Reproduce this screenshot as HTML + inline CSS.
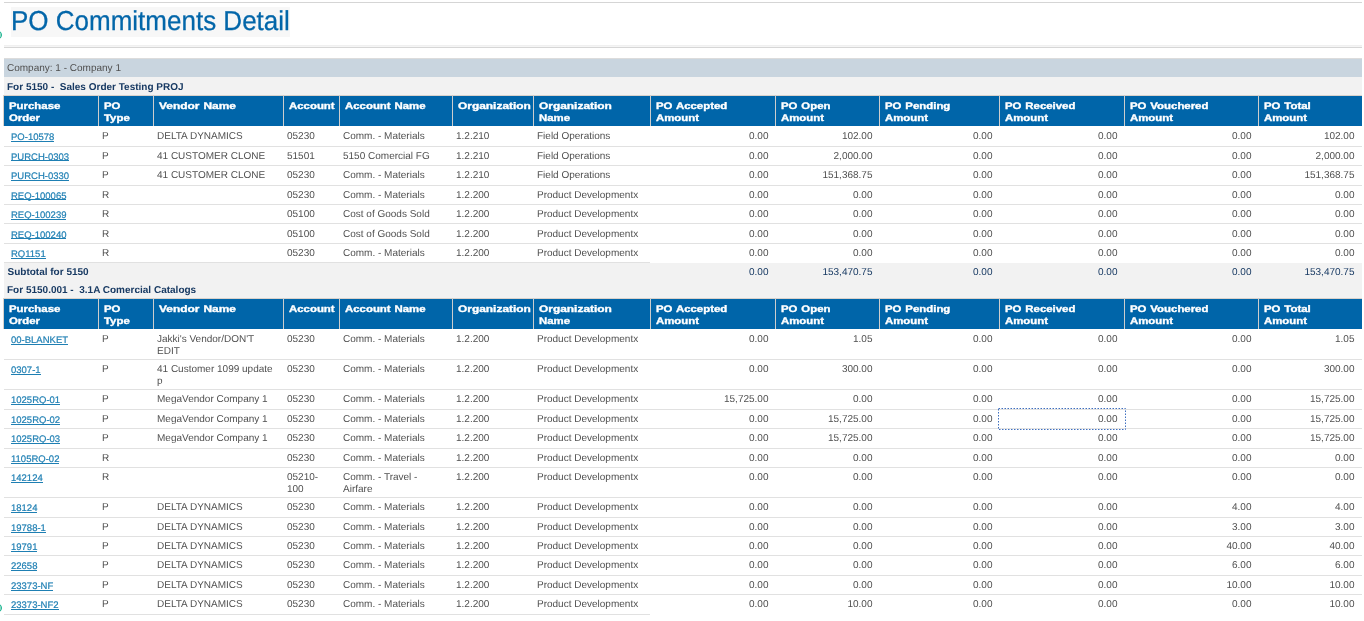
<!DOCTYPE html><html><head><meta charset="utf-8"><title>PO Commitments Detail</title><style>
*{box-sizing:border-box;margin:0;padding:0}
html,body{margin:0;padding:0}
body{width:1364px;height:621px;overflow:hidden;background:#fff;position:relative;font-family:"Liberation Sans",sans-serif;text-rendering:geometricPrecision}
.t{position:absolute;white-space:nowrap;line-height:20px;height:20px}
.b{font-size:10px;color:#505050}
.bb{font-size:10px;font-weight:bold;color:#183a63}
.sv{font-size:10px;color:#183a63}
.lk{font-size:9.5px;color:#1e7fb3;-webkit-text-stroke:0.2px #1e7fb3}
.ul{position:absolute;height:1px;background:#1e7fb3}
.hd{font-size:9.5px;font-weight:bold;color:#fff;transform-origin:0 0;transform:scaleX(1.2);-webkit-text-stroke:0.35px #fff;word-spacing:0.6px}
.clip{overflow:hidden}
.hr{position:absolute;left:4px;width:1358px;height:1px;background:#d5d5d5}
.title{position:absolute;left:11px;top:7px;height:30px;width:279px;background:#f7f7f7}
.ttxt{position:absolute;left:11px;top:11px;line-height:20px;font-size:26px;color:#0366a9;white-space:nowrap;transform-origin:0 19px;transform:scaleY(1.055);-webkit-text-stroke:0.25px #0366a9}
.ring{position:absolute;width:10px;height:10px;border-radius:50%;border:1.8px solid #1db592;background:#9adccb}
.bar{position:absolute;left:4px;width:1358px}
.hbg{position:absolute;left:3px;width:1359px;height:31px;background:#0065a9;border-top:1px solid #d9d2cc;border-left:1px solid #d9d2cc}
.hsep{position:absolute;width:1px;height:31px;background:#cdcdcd}
.rb{position:absolute;left:4px;height:1px;background:#e1e1e1}
.focus{position:absolute;left:998px;top:408px;width:128px;height:22px}
</style></head><body>
<div id="w" style="position:absolute;left:0;top:0;width:1364px;height:621px;will-change:transform">
<div class="hr" style="top:2px"></div>
<div class="title"></div><div class="ttxt">PO Commitments Detail</div>
<div class="hr" style="top:45px;background:#f0f0f0"></div><div class="hr" style="top:46px;background:#f5f5f5"></div><div class="hr" style="top:47px;background:#d6d6d6"></div>
<div class="ring" style="left:-7.8px;top:30px"></div>
<div class="bar" style="top:58px;height:19px;background:#c9d5df;border-top:1px solid #dcdcdc"></div>
<div class="t b" style="left:7px;top:59px">Company: 1 - Company 1</div>
<div class="bar" style="top:77px;height:18px;background:#f2f2f2"></div>
<div class="t bb" style="left:7px;top:78px">For 5150 -  Sales Order Testing PROJ</div>
<div class="hbg" style="top:95px"></div>
<div class="t hd" style="left:8.5px;top:97px">Purchase</div>
<div class="t hd" style="left:8.5px;top:109px">Order</div>
<div class="hsep" style="left:98px;top:95px"></div>
<div class="t hd" style="left:103.5px;top:97px">PO</div>
<div class="t hd" style="left:103.5px;top:109px">Type</div>
<div class="hsep" style="left:153px;top:95px"></div>
<div class="t hd" style="left:158.5px;top:97px;transform:scaleX(1.255)">Vendor Name</div>
<div class="hsep" style="left:283px;top:95px"></div>
<div class="t hd" style="left:288.5px;top:97px">Account</div>
<div class="hsep" style="left:339px;top:95px"></div>
<div class="t hd" style="left:344.5px;top:97px">Account Name</div>
<div class="hsep" style="left:452px;top:95px"></div>
<div class="t hd" style="left:457.5px;top:97px;transform:scaleX(1.255)">Organization</div>
<div class="hsep" style="left:533px;top:95px"></div>
<div class="t hd" style="left:538.5px;top:97px;transform:scaleX(1.255)">Organization</div>
<div class="t hd" style="left:538.5px;top:109px">Name</div>
<div class="hsep" style="left:650px;top:95px"></div>
<div class="t hd" style="left:655.5px;top:97px">PO Accepted</div>
<div class="t hd" style="left:655.5px;top:109px">Amount</div>
<div class="hsep" style="left:775px;top:95px"></div>
<div class="t hd" style="left:780.5px;top:97px">PO Open</div>
<div class="t hd" style="left:780.5px;top:109px">Amount</div>
<div class="hsep" style="left:879px;top:95px"></div>
<div class="t hd" style="left:884.5px;top:97px">PO Pending</div>
<div class="t hd" style="left:884.5px;top:109px">Amount</div>
<div class="hsep" style="left:999px;top:95px"></div>
<div class="t hd" style="left:1004.5px;top:97px">PO Received</div>
<div class="t hd" style="left:1004.5px;top:109px">Amount</div>
<div class="hsep" style="left:1124px;top:95px"></div>
<div class="t hd" style="left:1129.5px;top:97px">PO Vouchered</div>
<div class="t hd" style="left:1129.5px;top:109px">Amount</div>
<div class="hsep" style="left:1258px;top:95px"></div>
<div class="t hd" style="left:1263.5px;top:97px">PO Total</div>
<div class="t hd" style="left:1263.5px;top:109px">Amount</div>
<div class="rb" style="top:146px;width:1358px"></div>
<div class="t lk" style="left:11px;top:128px">PO-10578</div>
<div class="ul" style="left:11px;top:141px;width:43.3px"></div>
<div class="t b" style="left:102px;top:127px">P</div>
<div class="t b" style="left:157px;top:127px">DELTA DYNAMICS</div>
<div class="t b" style="left:287px;top:127px">05230</div>
<div class="t b" style="left:343px;top:127px">Comm. - Materials</div>
<div class="t b" style="left:456px;top:127px">1.2.210</div>
<div class="t b clip" style="left:537px;top:127px;width:109px">Field Operations</div>
<div class="t b r" style="right:595.5px;top:127px">0.00</div>
<div class="t b r" style="right:491.5px;top:127px">102.00</div>
<div class="t b r" style="right:371.5px;top:127px">0.00</div>
<div class="t b r" style="right:246.5px;top:127px">0.00</div>
<div class="t b r" style="right:112.5px;top:127px">0.00</div>
<div class="t b r" style="right:9.5px;top:127px">102.00</div>
<div class="rb" style="top:165px;width:1358px"></div>
<div class="t lk" style="left:11px;top:148px">PURCH-0303</div>
<div class="ul" style="left:11px;top:160px;width:58.08px"></div>
<div class="t b" style="left:102px;top:147px">P</div>
<div class="t b" style="left:157px;top:147px">41 CUSTOMER CLONE</div>
<div class="t b" style="left:287px;top:147px">51501</div>
<div class="t b" style="left:343px;top:147px">5150 Comercial FG</div>
<div class="t b" style="left:456px;top:147px">1.2.210</div>
<div class="t b clip" style="left:537px;top:147px;width:109px">Field Operations</div>
<div class="t b r" style="right:595.5px;top:147px">0.00</div>
<div class="t b r" style="right:491.5px;top:147px">2,000.00</div>
<div class="t b r" style="right:371.5px;top:147px">0.00</div>
<div class="t b r" style="right:246.5px;top:147px">0.00</div>
<div class="t b r" style="right:112.5px;top:147px">0.00</div>
<div class="t b r" style="right:9.5px;top:147px">2,000.00</div>
<div class="rb" style="top:185px;width:1358px"></div>
<div class="t lk" style="left:11px;top:167px">PURCH-0330</div>
<div class="ul" style="left:11px;top:180px;width:58.08px"></div>
<div class="t b" style="left:102px;top:166px">P</div>
<div class="t b" style="left:157px;top:166px">41 CUSTOMER CLONE</div>
<div class="t b" style="left:287px;top:166px">05230</div>
<div class="t b" style="left:343px;top:166px">Comm. - Materials</div>
<div class="t b" style="left:456px;top:166px">1.2.210</div>
<div class="t b clip" style="left:537px;top:166px;width:109px">Field Operations</div>
<div class="t b r" style="right:595.5px;top:166px">0.00</div>
<div class="t b r" style="right:491.5px;top:166px">151,368.75</div>
<div class="t b r" style="right:371.5px;top:166px">0.00</div>
<div class="t b r" style="right:246.5px;top:166px">0.00</div>
<div class="t b r" style="right:112.5px;top:166px">0.00</div>
<div class="t b r" style="right:9.5px;top:166px">151,368.75</div>
<div class="rb" style="top:204px;width:1358px"></div>
<div class="t lk" style="left:11px;top:187px">REQ-100065</div>
<div class="ul" style="left:11px;top:199px;width:55.45px"></div>
<div class="t b" style="left:102px;top:186px">R</div>
<div class="t b" style="left:287px;top:186px">05230</div>
<div class="t b" style="left:343px;top:186px">Comm. - Materials</div>
<div class="t b" style="left:456px;top:186px">1.2.200</div>
<div class="t b clip" style="left:537px;top:186px;width:109px">Product Developmentx</div>
<div class="t b r" style="right:595.5px;top:186px">0.00</div>
<div class="t b r" style="right:491.5px;top:186px">0.00</div>
<div class="t b r" style="right:371.5px;top:186px">0.00</div>
<div class="t b r" style="right:246.5px;top:186px">0.00</div>
<div class="t b r" style="right:112.5px;top:186px">0.00</div>
<div class="t b r" style="right:9.5px;top:186px">0.00</div>
<div class="rb" style="top:223px;width:1358px"></div>
<div class="t lk" style="left:11px;top:206px">REQ-100239</div>
<div class="ul" style="left:11px;top:219px;width:55.45px"></div>
<div class="t b" style="left:102px;top:205px">R</div>
<div class="t b" style="left:287px;top:205px">05100</div>
<div class="t b" style="left:343px;top:205px">Cost of Goods Sold</div>
<div class="t b" style="left:456px;top:205px">1.2.200</div>
<div class="t b clip" style="left:537px;top:205px;width:109px">Product Developmentx</div>
<div class="t b r" style="right:595.5px;top:205px">0.00</div>
<div class="t b r" style="right:491.5px;top:205px">0.00</div>
<div class="t b r" style="right:371.5px;top:205px">0.00</div>
<div class="t b r" style="right:246.5px;top:205px">0.00</div>
<div class="t b r" style="right:112.5px;top:205px">0.00</div>
<div class="t b r" style="right:9.5px;top:205px">0.00</div>
<div class="rb" style="top:243px;width:1358px"></div>
<div class="t lk" style="left:11px;top:226px">REQ-100240</div>
<div class="ul" style="left:11px;top:238px;width:55.45px"></div>
<div class="t b" style="left:102px;top:225px">R</div>
<div class="t b" style="left:287px;top:225px">05100</div>
<div class="t b" style="left:343px;top:225px">Cost of Goods Sold</div>
<div class="t b" style="left:456px;top:225px">1.2.200</div>
<div class="t b clip" style="left:537px;top:225px;width:109px">Product Developmentx</div>
<div class="t b r" style="right:595.5px;top:225px">0.00</div>
<div class="t b r" style="right:491.5px;top:225px">0.00</div>
<div class="t b r" style="right:371.5px;top:225px">0.00</div>
<div class="t b r" style="right:246.5px;top:225px">0.00</div>
<div class="t b r" style="right:112.5px;top:225px">0.00</div>
<div class="t b r" style="right:9.5px;top:225px">0.00</div>
<div class="rb" style="top:262px;width:646px"></div>
<div class="t lk" style="left:11px;top:245px">RQ1151</div>
<div class="ul" style="left:11px;top:258px;width:34.68px"></div>
<div class="t b" style="left:102px;top:244px">R</div>
<div class="t b" style="left:287px;top:244px">05230</div>
<div class="t b" style="left:343px;top:244px">Comm. - Materials</div>
<div class="t b" style="left:456px;top:244px">1.2.200</div>
<div class="t b clip" style="left:537px;top:244px;width:109px">Product Developmentx</div>
<div class="t b r" style="right:595.5px;top:244px">0.00</div>
<div class="t b r" style="right:491.5px;top:244px">0.00</div>
<div class="t b r" style="right:371.5px;top:244px">0.00</div>
<div class="t b r" style="right:246.5px;top:244px">0.00</div>
<div class="t b r" style="right:112.5px;top:244px">0.00</div>
<div class="t b r" style="right:9.5px;top:244px">0.00</div>
<div class="bar" style="top:263px;height:35px;background:#f2f2f2"></div>
<div class="t bb" style="left:7.5px;top:263px">Subtotal for 5150</div>
<div class="t sv r" style="right:595.5px;top:263px">0.00</div>
<div class="t sv r" style="right:491.5px;top:263px">153,470.75</div>
<div class="t sv r" style="right:371.5px;top:263px">0.00</div>
<div class="t sv r" style="right:246.5px;top:263px">0.00</div>
<div class="t sv r" style="right:112.5px;top:263px">0.00</div>
<div class="t sv r" style="right:9.5px;top:263px">153,470.75</div>
<div class="t bb" style="left:7px;top:281px">For 5150.001 -  3.1A Comercial Catalogs</div>
<div class="hbg" style="top:298px"></div>
<div class="t hd" style="left:8.5px;top:300px">Purchase</div>
<div class="t hd" style="left:8.5px;top:312px">Order</div>
<div class="hsep" style="left:98px;top:298px"></div>
<div class="t hd" style="left:103.5px;top:300px">PO</div>
<div class="t hd" style="left:103.5px;top:312px">Type</div>
<div class="hsep" style="left:153px;top:298px"></div>
<div class="t hd" style="left:158.5px;top:300px;transform:scaleX(1.255)">Vendor Name</div>
<div class="hsep" style="left:283px;top:298px"></div>
<div class="t hd" style="left:288.5px;top:300px">Account</div>
<div class="hsep" style="left:339px;top:298px"></div>
<div class="t hd" style="left:344.5px;top:300px">Account Name</div>
<div class="hsep" style="left:452px;top:298px"></div>
<div class="t hd" style="left:457.5px;top:300px;transform:scaleX(1.255)">Organization</div>
<div class="hsep" style="left:533px;top:298px"></div>
<div class="t hd" style="left:538.5px;top:300px;transform:scaleX(1.255)">Organization</div>
<div class="t hd" style="left:538.5px;top:312px">Name</div>
<div class="hsep" style="left:650px;top:298px"></div>
<div class="t hd" style="left:655.5px;top:300px">PO Accepted</div>
<div class="t hd" style="left:655.5px;top:312px">Amount</div>
<div class="hsep" style="left:775px;top:298px"></div>
<div class="t hd" style="left:780.5px;top:300px">PO Open</div>
<div class="t hd" style="left:780.5px;top:312px">Amount</div>
<div class="hsep" style="left:879px;top:298px"></div>
<div class="t hd" style="left:884.5px;top:300px">PO Pending</div>
<div class="t hd" style="left:884.5px;top:312px">Amount</div>
<div class="hsep" style="left:999px;top:298px"></div>
<div class="t hd" style="left:1004.5px;top:300px">PO Received</div>
<div class="t hd" style="left:1004.5px;top:312px">Amount</div>
<div class="hsep" style="left:1124px;top:298px"></div>
<div class="t hd" style="left:1129.5px;top:300px">PO Vouchered</div>
<div class="t hd" style="left:1129.5px;top:312px">Amount</div>
<div class="hsep" style="left:1258px;top:298px"></div>
<div class="t hd" style="left:1263.5px;top:300px">PO Total</div>
<div class="t hd" style="left:1263.5px;top:312px">Amount</div>
<div class="rb" style="top:359px;width:1358px"></div>
<div class="t lk" style="left:11px;top:331px">00-BLANKET</div>
<div class="ul" style="left:11px;top:344px;width:57.02px"></div>
<div class="t b" style="left:102px;top:330px">P</div>
<div class="t b" style="left:157px;top:330px">Jakki's Vendor/DON'T</div>
<div class="t b" style="left:157px;top:342px">EDIT</div>
<div class="t b" style="left:287px;top:330px">05230</div>
<div class="t b" style="left:343px;top:330px">Comm. - Materials</div>
<div class="t b" style="left:456px;top:330px">1.2.200</div>
<div class="t b clip" style="left:537px;top:330px;width:109px">Product Developmentx</div>
<div class="t b r" style="right:595.5px;top:330px">0.00</div>
<div class="t b r" style="right:491.5px;top:330px">1.05</div>
<div class="t b r" style="right:371.5px;top:330px">0.00</div>
<div class="t b r" style="right:246.5px;top:330px">0.00</div>
<div class="t b r" style="right:112.5px;top:330px">0.00</div>
<div class="t b r" style="right:9.5px;top:330px">1.05</div>
<div class="rb" style="top:389px;width:1358px"></div>
<div class="t lk" style="left:11px;top:361px">0307-1</div>
<div class="ul" style="left:11px;top:374px;width:29.58px"></div>
<div class="t b" style="left:102px;top:360px">P</div>
<div class="t b" style="left:157px;top:360px">41 Customer 1099 update</div>
<div class="t b" style="left:157px;top:372px">p</div>
<div class="t b" style="left:287px;top:360px">05230</div>
<div class="t b" style="left:343px;top:360px">Comm. - Materials</div>
<div class="t b" style="left:456px;top:360px">1.2.200</div>
<div class="t b clip" style="left:537px;top:360px;width:109px">Product Developmentx</div>
<div class="t b r" style="right:595.5px;top:360px">0.00</div>
<div class="t b r" style="right:491.5px;top:360px">300.00</div>
<div class="t b r" style="right:371.5px;top:360px">0.00</div>
<div class="t b r" style="right:246.5px;top:360px">0.00</div>
<div class="t b r" style="right:112.5px;top:360px">0.00</div>
<div class="t b r" style="right:9.5px;top:360px">300.00</div>
<div class="rb" style="top:409px;width:1358px"></div>
<div class="t lk" style="left:11px;top:391px">1025RQ-01</div>
<div class="ul" style="left:11px;top:404px;width:49.11px"></div>
<div class="t b" style="left:102px;top:390px">P</div>
<div class="t b" style="left:157px;top:390px">MegaVendor Company 1</div>
<div class="t b" style="left:287px;top:390px">05230</div>
<div class="t b" style="left:343px;top:390px">Comm. - Materials</div>
<div class="t b" style="left:456px;top:390px">1.2.200</div>
<div class="t b clip" style="left:537px;top:390px;width:109px">Product Developmentx</div>
<div class="t b r" style="right:595.5px;top:390px">15,725.00</div>
<div class="t b r" style="right:491.5px;top:390px">0.00</div>
<div class="t b r" style="right:371.5px;top:390px">0.00</div>
<div class="t b r" style="right:246.5px;top:390px">0.00</div>
<div class="t b r" style="right:112.5px;top:390px">0.00</div>
<div class="t b r" style="right:9.5px;top:390px">15,725.00</div>
<div class="rb" style="top:428px;width:1358px"></div>
<div class="t lk" style="left:11px;top:411px">1025RQ-02</div>
<div class="ul" style="left:11px;top:424px;width:49.11px"></div>
<div class="t b" style="left:102px;top:410px">P</div>
<div class="t b" style="left:157px;top:410px">MegaVendor Company 1</div>
<div class="t b" style="left:287px;top:410px">05230</div>
<div class="t b" style="left:343px;top:410px">Comm. - Materials</div>
<div class="t b" style="left:456px;top:410px">1.2.200</div>
<div class="t b clip" style="left:537px;top:410px;width:109px">Product Developmentx</div>
<div class="t b r" style="right:595.5px;top:410px">0.00</div>
<div class="t b r" style="right:491.5px;top:410px">15,725.00</div>
<div class="t b r" style="right:371.5px;top:410px">0.00</div>
<div class="t b r" style="right:246.5px;top:410px">0.00</div>
<div class="t b r" style="right:112.5px;top:410px">0.00</div>
<div class="t b r" style="right:9.5px;top:410px">15,725.00</div>
<div class="rb" style="top:448px;width:1358px"></div>
<div class="t lk" style="left:11px;top:430px">1025RQ-03</div>
<div class="ul" style="left:11px;top:443px;width:49.11px"></div>
<div class="t b" style="left:102px;top:429px">P</div>
<div class="t b" style="left:157px;top:429px">MegaVendor Company 1</div>
<div class="t b" style="left:287px;top:429px">05230</div>
<div class="t b" style="left:343px;top:429px">Comm. - Materials</div>
<div class="t b" style="left:456px;top:429px">1.2.200</div>
<div class="t b clip" style="left:537px;top:429px;width:109px">Product Developmentx</div>
<div class="t b r" style="right:595.5px;top:429px">0.00</div>
<div class="t b r" style="right:491.5px;top:429px">15,725.00</div>
<div class="t b r" style="right:371.5px;top:429px">0.00</div>
<div class="t b r" style="right:246.5px;top:429px">0.00</div>
<div class="t b r" style="right:112.5px;top:429px">0.00</div>
<div class="t b r" style="right:9.5px;top:429px">15,725.00</div>
<div class="rb" style="top:467px;width:1358px"></div>
<div class="t lk" style="left:11px;top:450px">1105RQ-02</div>
<div class="ul" style="left:11px;top:463px;width:48.41px"></div>
<div class="t b" style="left:102px;top:449px">R</div>
<div class="t b" style="left:287px;top:449px">05230</div>
<div class="t b" style="left:343px;top:449px">Comm. - Materials</div>
<div class="t b" style="left:456px;top:449px">1.2.200</div>
<div class="t b clip" style="left:537px;top:449px;width:109px">Product Developmentx</div>
<div class="t b r" style="right:595.5px;top:449px">0.00</div>
<div class="t b r" style="right:491.5px;top:449px">0.00</div>
<div class="t b r" style="right:371.5px;top:449px">0.00</div>
<div class="t b r" style="right:246.5px;top:449px">0.00</div>
<div class="t b r" style="right:112.5px;top:449px">0.00</div>
<div class="t b r" style="right:9.5px;top:449px">0.00</div>
<div class="rb" style="top:497px;width:1358px"></div>
<div class="t lk" style="left:11px;top:469px">142124</div>
<div class="ul" style="left:11px;top:482px;width:31.7px"></div>
<div class="t b" style="left:102px;top:468px">R</div>
<div class="t b" style="left:287px;top:468px">05210-</div>
<div class="t b" style="left:287px;top:480px">100</div>
<div class="t b" style="left:343px;top:468px">Comm. - Travel -</div>
<div class="t b" style="left:343px;top:480px">Airfare</div>
<div class="t b" style="left:456px;top:468px">1.2.200</div>
<div class="t b clip" style="left:537px;top:468px;width:109px">Product Developmentx</div>
<div class="t b r" style="right:595.5px;top:468px">0.00</div>
<div class="t b r" style="right:491.5px;top:468px">0.00</div>
<div class="t b r" style="right:371.5px;top:468px">0.00</div>
<div class="t b r" style="right:246.5px;top:468px">0.00</div>
<div class="t b r" style="right:112.5px;top:468px">0.00</div>
<div class="t b r" style="right:9.5px;top:468px">0.00</div>
<div class="rb" style="top:517px;width:1358px"></div>
<div class="t lk" style="left:11px;top:499px">18124</div>
<div class="ul" style="left:11px;top:512px;width:26.41px"></div>
<div class="t b" style="left:102px;top:498px">P</div>
<div class="t b" style="left:157px;top:498px">DELTA DYNAMICS</div>
<div class="t b" style="left:287px;top:498px">05230</div>
<div class="t b" style="left:343px;top:498px">Comm. - Materials</div>
<div class="t b" style="left:456px;top:498px">1.2.200</div>
<div class="t b clip" style="left:537px;top:498px;width:109px">Product Developmentx</div>
<div class="t b r" style="right:595.5px;top:498px">0.00</div>
<div class="t b r" style="right:491.5px;top:498px">0.00</div>
<div class="t b r" style="right:371.5px;top:498px">0.00</div>
<div class="t b r" style="right:246.5px;top:498px">0.00</div>
<div class="t b r" style="right:112.5px;top:498px">4.00</div>
<div class="t b r" style="right:9.5px;top:498px">4.00</div>
<div class="rb" style="top:536px;width:1358px"></div>
<div class="t lk" style="left:11px;top:519px">19788-1</div>
<div class="ul" style="left:11px;top:532px;width:34.86px"></div>
<div class="t b" style="left:102px;top:518px">P</div>
<div class="t b" style="left:157px;top:518px">DELTA DYNAMICS</div>
<div class="t b" style="left:287px;top:518px">05230</div>
<div class="t b" style="left:343px;top:518px">Comm. - Materials</div>
<div class="t b" style="left:456px;top:518px">1.2.200</div>
<div class="t b clip" style="left:537px;top:518px;width:109px">Product Developmentx</div>
<div class="t b r" style="right:595.5px;top:518px">0.00</div>
<div class="t b r" style="right:491.5px;top:518px">0.00</div>
<div class="t b r" style="right:371.5px;top:518px">0.00</div>
<div class="t b r" style="right:246.5px;top:518px">0.00</div>
<div class="t b r" style="right:112.5px;top:518px">3.00</div>
<div class="t b r" style="right:9.5px;top:518px">3.00</div>
<div class="rb" style="top:555px;width:1358px"></div>
<div class="t lk" style="left:11px;top:538px">19791</div>
<div class="ul" style="left:11px;top:551px;width:26.41px"></div>
<div class="t b" style="left:102px;top:537px">P</div>
<div class="t b" style="left:157px;top:537px">DELTA DYNAMICS</div>
<div class="t b" style="left:287px;top:537px">05230</div>
<div class="t b" style="left:343px;top:537px">Comm. - Materials</div>
<div class="t b" style="left:456px;top:537px">1.2.200</div>
<div class="t b clip" style="left:537px;top:537px;width:109px">Product Developmentx</div>
<div class="t b r" style="right:595.5px;top:537px">0.00</div>
<div class="t b r" style="right:491.5px;top:537px">0.00</div>
<div class="t b r" style="right:371.5px;top:537px">0.00</div>
<div class="t b r" style="right:246.5px;top:537px">0.00</div>
<div class="t b r" style="right:112.5px;top:537px">40.00</div>
<div class="t b r" style="right:9.5px;top:537px">40.00</div>
<div class="rb" style="top:575px;width:1358px"></div>
<div class="t lk" style="left:11px;top:557px">22658</div>
<div class="ul" style="left:11px;top:570px;width:26.41px"></div>
<div class="t b" style="left:102px;top:556px">P</div>
<div class="t b" style="left:157px;top:556px">DELTA DYNAMICS</div>
<div class="t b" style="left:287px;top:556px">05230</div>
<div class="t b" style="left:343px;top:556px">Comm. - Materials</div>
<div class="t b" style="left:456px;top:556px">1.2.200</div>
<div class="t b clip" style="left:537px;top:556px;width:109px">Product Developmentx</div>
<div class="t b r" style="right:595.5px;top:556px">0.00</div>
<div class="t b r" style="right:491.5px;top:556px">0.00</div>
<div class="t b r" style="right:371.5px;top:556px">0.00</div>
<div class="t b r" style="right:246.5px;top:556px">0.00</div>
<div class="t b r" style="right:112.5px;top:556px">6.00</div>
<div class="t b r" style="right:9.5px;top:556px">6.00</div>
<div class="rb" style="top:594px;width:1358px"></div>
<div class="t lk" style="left:11px;top:577px">23373-NF</div>
<div class="ul" style="left:11px;top:590px;width:42.24px"></div>
<div class="t b" style="left:102px;top:576px">P</div>
<div class="t b" style="left:157px;top:576px">DELTA DYNAMICS</div>
<div class="t b" style="left:287px;top:576px">05230</div>
<div class="t b" style="left:343px;top:576px">Comm. - Materials</div>
<div class="t b" style="left:456px;top:576px">1.2.200</div>
<div class="t b clip" style="left:537px;top:576px;width:109px">Product Developmentx</div>
<div class="t b r" style="right:595.5px;top:576px">0.00</div>
<div class="t b r" style="right:491.5px;top:576px">0.00</div>
<div class="t b r" style="right:371.5px;top:576px">0.00</div>
<div class="t b r" style="right:246.5px;top:576px">0.00</div>
<div class="t b r" style="right:112.5px;top:576px">10.00</div>
<div class="t b r" style="right:9.5px;top:576px">10.00</div>
<div class="rb" style="top:614px;width:646px"></div>
<div class="t lk" style="left:11px;top:596px">23373-NF2</div>
<div class="ul" style="left:11px;top:609px;width:47.52px"></div>
<div class="t b" style="left:102px;top:595px">P</div>
<div class="t b" style="left:157px;top:595px">DELTA DYNAMICS</div>
<div class="t b" style="left:287px;top:595px">05230</div>
<div class="t b" style="left:343px;top:595px">Comm. - Materials</div>
<div class="t b" style="left:456px;top:595px">1.2.200</div>
<div class="t b clip" style="left:537px;top:595px;width:109px">Product Developmentx</div>
<div class="t b r" style="right:595.5px;top:595px">0.00</div>
<div class="t b r" style="right:491.5px;top:595px">10.00</div>
<div class="t b r" style="right:371.5px;top:595px">0.00</div>
<div class="t b r" style="right:246.5px;top:595px">0.00</div>
<div class="t b r" style="right:112.5px;top:595px">0.00</div>
<div class="t b r" style="right:9.5px;top:595px">10.00</div>
<svg class="focus" width="128" height="22" viewBox="0 0 128 22"><rect x="0.5" y="0.5" width="127" height="21" fill="none" stroke="#3f6fbf" stroke-width="1" stroke-dasharray="1.5 1.5"/></svg>
<div class="ring" style="left:-7.8px;top:602.5px"></div>
</div></body></html>
